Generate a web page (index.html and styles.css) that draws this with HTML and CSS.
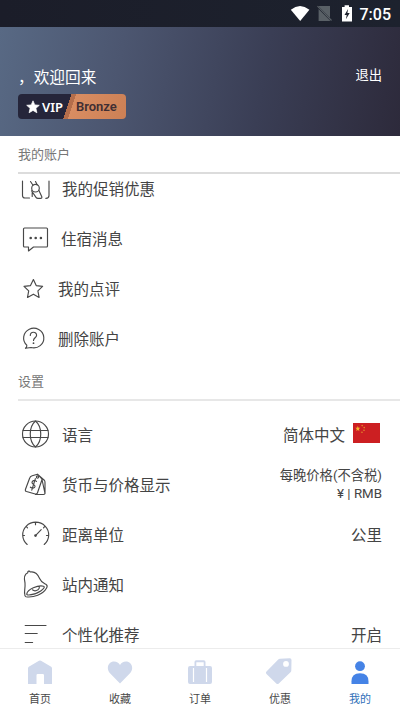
FILE: index.html
```html
<!DOCTYPE html>
<html lang="zh-CN">
<head>
<meta charset="utf-8">
<title>我的</title>
<link rel="stylesheet" href="styles.css">
</head>
<body>
<div class="app">
  <div class="status">
    <svg class="status-icons" width="66" height="18" viewBox="0 0 66 18">
      <path d="M0.8 4.8Q10 -2.6 19.4 4.8L10.2 16Z" fill="#fff"/>
      <path d="M31.5 1H40V12.8L28.7 1.5L29.3 1ZM28.6 4L40 15.5V16H28.6Z" fill="#596066"/>
      <path d="M27.5 1.2L41.5 15.5" stroke="#596066" stroke-width="1.2"/>
      <path d="M52 2H54.6V0.2H59V2H62V16.5H52Z" fill="#fff"/>
      <path d="M58.1 4L54.5 10H56.7L55.9 14.2L59.7 8H57.4Z" fill="#1d222e"/>
    </svg>
    <span class="clock">7:05</span>
  </div>
  <header class="hero">
    <div>
      <div class="welcome">，欢迎回来</div>
      <div class="badge">
        <svg class="badge-star" width="14" height="14" viewBox="0 0 14 14"><path d="M7 .8l1.8 4.1 4.5.4-3.4 3 1 4.5L7 10.4l-3.9 2.4 1-4.5-3.4-3 4.5-.4z" fill="#fff" stroke="#fff" stroke-width=".7" stroke-linejoin="round"/></svg>
        <span class="vip">VIP</span>
        <span class="tier">Bronze</span>
      </div>
    </div>
    <a class="logout">退出</a>
  </header>
  <main class="content">
    <h2 class="heading account-heading">我的账户</h2>
    <section class="list account-list">
      <div class="row">
        <svg class="icon" viewBox="0 0 36 36"><path d="M4.5 10V24.5Q4.5 27 7 27H11.5M31 10V24.5Q31 27.3 27.8 27.3M12.5 10.5L15 14.2M17.5 10.5L19.3 13.9M13.5 19.8L18 26.4Q18.7 27.4 20 27.4H22.5Q24.4 27.4 23.7 25.5L20.8 19.2M14.2 21.5V25.5"/><circle cx="17.5" cy="17.2" r="3.8"/></svg>
        <span class="label">我的促销优惠</span>
      </div>
      <div class="row">
        <svg class="icon" viewBox="0 0 36 36"><path d="M6.5 7H28.5Q29.5 7 29.5 8V25Q29.5 26 28.5 26H15.5L10.5 30V26H6.5Q5.5 26 5.5 25V8Q5.5 7 6.5 7Z"/><g class="solid"><circle cx="12.7" cy="17" r="1.3"/><circle cx="17.7" cy="17" r="1.3"/><circle cx="22.9" cy="17" r="1.3"/></g></svg>
        <span class="label label-nudge">住宿消息</span>
      </div>
      <div class="row row-tight">
        <svg class="icon" viewBox="0 0 36 36"><path d="M15.4 8.5L18.2 14.6 24.6 15.4 19.9 19.8 21.1 26.4 15.4 23.2 9.5 26.4 10.7 19.8 6 15.4 12.5 14.6Z"/></svg>
        <span class="label">我的点评</span>
      </div>
      <div class="row row-tight">
        <svg class="icon" viewBox="0 0 36 36"><path d="M8.8 24.2A10.1 9.8 0 1 1 13 26.5L7.5 27.3Q9 26 8.8 24.2ZM12.3 14.5C12.3 10.2 18.6 10.2 18.6 14.2C18.6 16.8 15.5 16.8 15.5 19.5"/><circle class="solid" cx="15.5" cy="22.2" r=".9"/></svg>
        <span class="label">删除账户</span>
      </div>
    </section>
    <h2 class="heading settings-heading">设置</h2>
    <section class="list settings-list">
      <div class="row">
        <svg class="icon" viewBox="0 0 36 36"><circle cx="17.5" cy="17" r="13"/><path d="M5 13.5H30M5 20.5H30M17.5 4C10.5 10 10.5 24 17.5 30C24.5 24 24.5 10 17.5 4Z"/></svg>
        <span class="label">语言</span>
        <span class="value">简体中文</span>
        <svg class="flag" width="27" height="20" viewBox="0 0 28 20" preserveAspectRatio="none"><path fill="#cc1f22" d="M0 0H28V20H0Z"/><path fill="#f5b52c" d="M5 3l.7 1.7 1.9.1-1.5 1.2.5 1.9L5 6.9 3.4 7.9l.5-1.9-1.5-1.2 1.9-.1z"/><g fill="#e5902b"><circle cx="9.5" cy="2.6" r=".8"/><circle cx="11.6" cy="4.6" r=".8"/><circle cx="11.4" cy="7.3" r=".8"/><circle cx="9.3" cy="9.3" r=".8"/></g></svg>
      </div>
      <div class="row">
        <svg class="icon" viewBox="0 0 36 36"><path d="M14.2 8.8L19.5 7.2 23.6 11.5Q24.2 12.3 23.8 13.2L19.5 25.8Q18.9 27.5 17.2 27L8.5 24.5Q6.9 24 7.5 22.3L11.7 11Q12.2 9.5 14.2 8.8ZM20 7.8L26.3 13.2Q27 14 27 15.5V26Q27 27.5 25.5 27.5H17.5M24 12.5L27 26.5"/><circle cx="19.5" cy="10" r="1.1"/><path d="M18.5 14.4C16.5 12.7 14 13.6 14 15.5C14 17.5 17.5 17.5 17 19.7C16.5 21.5 14 21.5 12.4 20.2M17.4 11.7L13.8 23.2"/></svg>
        <span class="label">货币与价格显示</span>
        <span class="value value-small">每晚价格(不含税)<br>¥ | RMB</span>
      </div>
      <div class="row">
        <svg class="icon" viewBox="0 0 36 36"><path d="M9.2 27.5A13 12.7 0 1 1 26.2 27.5M17.5 6V7.7M8.4 9.6L9.5 10.8M26.6 9.6L25.5 10.8M4.8 18.5H6.5M30.3 18.5H28.5M17.5 18.6L23.2 12.7"/><circle class="solid" cx="17.5" cy="18.6" r="1.3"/></svg>
        <span class="label">距离单位</span>
        <span class="value">公里</span>
      </div>
      <div class="row">
        <svg class="icon" viewBox="0 0 36 36"><path d="M6.8 27.2C5.8 25 7.5 22 7 16C5.5 10 7.2 6.8 9.8 5.7C9.5 4.2 11.4 3.3 12.3 5C16 4.3 19.5 6.5 21.6 11.5C23.5 16 26.3 16.5 28.4 17.7Q29.8 18.8 28.6 21C25 27.5 15.5 30.8 8 29.8Q6.5 29.3 6.8 27.2Z"/><path d="M8.8 26.8C9.5 22.5 20 17.7 25.5 19.2C29 20.3 19.5 27.7 10.8 28Q8.5 28 8.8 26.8ZM14.5 22.8Q16.8 24.8 20 22.8Q21.8 21.2 21.3 19.7"/></svg>
        <span class="label">站内通知</span>
      </div>
      <div class="row">
        <svg class="icon" viewBox="0 0 36 36"><path d="M7.2 8.5H28M7.2 16.5H19.2M7.2 25.5H14.6"/></svg>
        <span class="label">个性化推荐</span>
        <span class="value">开启</span>
      </div>
    </section>
  </main>
  <nav class="tabs">
    <a class="tab"><svg width="28" height="28" viewBox="0 0 28 28"><path d="M2 10.2Q2 9.3 2.8 8.7L13 2.8Q14 2.2 15 2.8L25.2 8.7Q26 9.3 26 10.2V26H18V17.2Q18 16 16.8 16H11.7Q10.5 16 10.5 17.2V26H2Z"/></svg><span>首页</span></a>
    <a class="tab"><svg width="28" height="28" viewBox="0 0 28 28"><path d="M14 25.6L4 15.2C-.8 9.5 3.2 3.6 8 3.6C10.8 3.6 12.8 5.1 14 7C15.2 5.1 17.2 3.6 20 3.6C24.8 3.6 28.8 9.5 24 15.2Z"/></svg><span>收藏</span></a>
    <a class="tab"><svg width="28" height="28" viewBox="0 0 28 28"><path fill-rule="evenodd" d="M8.5 8V4Q8.5 2.3 10.2 2.3H17.8Q19.5 2.3 19.5 4V8H24Q26 8 26 10V24Q26 26 24 26H4Q2 26 2 24V10Q2 8 4 8ZM10.3 8H17.7V4.3H10.3Z"/><path d="M7.5 10V24M20.5 10V24" stroke="#fff" stroke-width="1.2"/></svg><span>订单</span></a>
    <a class="tab"><svg width="28" height="28" viewBox="0 0 28 28"><path fill-rule="evenodd" d="M14 .7L23.8 .3Q25.5 .3 25.5 2L25.3 12.5Q25.3 13.5 24.5 14.3L12.8 25.4Q11.5 26.5 10.3 25.4L.5 16Q-.6 14.7 .5 13.5L12 1.7Q12.8.8 14 .7ZM20 3A2.9 2.9 0 1 0 20 8.8A2.9 2.9 0 1 0 20 3Z"/></svg><span>优惠</span></a>
    <a class="tab active"><svg width="28" height="28" viewBox="0 0 28 28"><circle cx="14" cy="8.2" r="4.9"/><path d="M5.5 26V23.3Q5.5 15.2 14 15.2T22.5 23.3V26Z"/></svg><span>我的</span></a>
  </nav>
</div>
</body>
</html>
```
FILE: styles.css
```css
* { box-sizing: border-box; }

body {
  margin: 0;
  background: #fff;
  color: #444;
  font-family: Roboto, "Noto Sans CJK SC", sans-serif;
}

.app {
  display: flex;
  flex-direction: column;
  width: 400px;
  height: 710px;
  overflow: hidden;
}

.status {
  flex: none;
  display: flex;
  justify-content: flex-end;
  align-items: center;
  gap: 4px;
  height: 27px;
  padding-right: 9px;
  background: linear-gradient(90deg, #1b1d29, #1d222e);
  color: #fff;
}

.clock { font-size: 16px; font-weight: 500; line-height: 27px; padding-top: 1px; }

.hero {
  flex: none;
  display: flex;
  justify-content: space-between;
  height: 109px;
  padding: 40px 18px 0;
  background: linear-gradient(100deg, #586984 0%, #4c5670 30%, #3a3e55 65%, #2d2a3b 100%);
  color: #fff;
}

.welcome { font-size: 15.7px; line-height: 22px; }

.logout { font-size: 13.3px; line-height: 18px; }

.badge {
  display: flex;
  align-items: center;
  width: 108px;
  height: 25px;
  margin-top: 5px;
  padding-left: 8px;
  border-radius: 4px;
  background: linear-gradient(108deg, #25253a 0 46%, #b56e4b 46% 50%, #d98d62 50%, #cc8055 100%);
  font-family: "Noto Sans", Roboto, sans-serif;
  font-size: 13px;
  font-weight: 600;
}

.badge-star { flex: none; }

.vip { width: 22px; margin-left: 2px; }

.tier { margin-left: 12px; color: #402e33; font-family: Roboto, sans-serif; font-size: 13px; font-weight: 600; }

.content { flex: 1; min-height: 0; overflow: hidden; }

.heading {
  margin: 0 0 0 18px;
  color: #777;
  font-size: 13px;
  font-weight: 400;
}

.account-heading {
  height: 38px;
  border-bottom: 2px solid #dcdcdc;
  line-height: 38px;
}

.settings-heading {
  height: 37px;
  border-bottom: 2px solid #e7e7e7;
  line-height: 35px;
}

.list { overflow: hidden; padding: 0 18px; }

.account-list { height: 190px; }
.account-list .row:first-child { margin-top: -10px; }
.settings-list { padding-top: 9px; }

.row {
  display: flex;
  align-items: center;
  height: 50px;
}

.icon {
  flex: none;
  width: 36px;
  height: 36px;
  fill: none;
  stroke: #484848;
  stroke-width: 1.15;
  stroke-linecap: round;
  stroke-linejoin: round;
}

.icon .solid { fill: #484848; stroke: none; }

.label { margin-left: 8px; padding-top: 1px; font-size: 15.5px; line-height: 22px; }
.label-nudge { margin-left: 7px; }
.row-tight .label { margin-left: 4px; }

.value { margin-left: auto; padding-top: 1px; font-size: 15.5px; line-height: 22px; }

.value-small { padding-top: 0; font-size: 13.3px; line-height: 18px; text-align: right; }

.flag { flex: none; margin: 0 2px 4px 8px; }

.tabs {
  flex: none;
  display: flex;
  height: 62px;
  border-top: 1px solid #ececec;
  background: #fff;
}

.tab {
  flex: 1;
  display: flex;
  flex-direction: column;
  align-items: center;
  padding-top: 9px;
  color: #484848;
  font-size: 11px;
  line-height: 16px;
}

.tab svg { fill: #cfd8eb; margin-bottom: 6px; }
.tab.active { color: #2f6fb8; }
.tab.active svg { fill: #4583e6; }
```
